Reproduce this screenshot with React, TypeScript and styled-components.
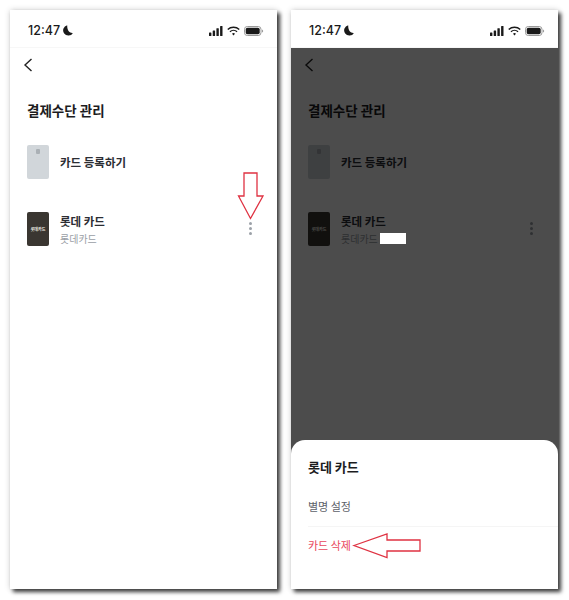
import styled, { createGlobalStyle } from 'styled-components';

const GlobalStyle = createGlobalStyle`
  html, body {
    margin: 0;
    padding: 0;
    background: #ffffff;
  }
  body {
    font-family: 'Inter', 'Noto Sans CJK KR', sans-serif;
  }
`;

const Page = styled.div`
  width: 569px;
  height: 600px;
  box-sizing: border-box;
  padding: 10px 11px 11px 10px;
  display: flex;
  gap: 14px;
`;

const Phone = styled.section`
  position: relative;
  width: 267px;
  height: 579px;
  flex: none;
  display: flex;
  flex-direction: column;
  background: #ffffff;
  box-shadow: 3px 3px 4px rgba(0, 0, 0, 0.75), 0 0 6px rgba(0, 0, 0, 0.18);
`;

const StatusBar = styled.header`
  height: 38px;
  flex: none;
  box-sizing: border-box;
  padding: 4px 13px 0 18px;
  display: flex;
  align-items: center;
  justify-content: space-between;
  border-bottom: 1px solid #f7f7f7;
`;

const Clock = styled.div`
  display: flex;
  align-items: center;
  gap: 3px;
  font-size: 12.5px;
  font-weight: 500;
  color: #1a1a1a;
`;

const StatusIcons = styled.div`
  display: flex;
  align-items: center;
  gap: 4px;
`;

const Body = styled.main`
  position: relative;
  flex: 1;
  display: flex;
  flex-direction: column;
  padding: 0 0 0 17px;
`;

const BackButton = styled.button`
  width: 12px;
  height: 16px;
  margin: 9px 0 0 -5px;
  padding: 0;
  border: 0;
  background: none;
  display: flex;
`;

const Title = styled.h1`
  margin: 27px 0 25px;
  font-size: 13.5px;
  line-height: 20px;
  font-weight: 700;
  color: #1c1c1e;
  font-family: 'Noto Sans CJK KR', sans-serif;
`;

const Rows = styled.div`
  display: flex;
  flex-direction: column;
  gap: 33px;
`;

const Row = styled.div`
  display: flex;
  align-items: center;
  gap: 11px;
  padding-right: 25px;
`;

const Card = styled.div<{ $dark?: boolean }>`
  position: relative;
  width: 22px;
  height: 34px;
  flex: none;
  border-radius: 2px;
  background: ${({ $dark }) => ($dark ? '#3a3631' : '#d1d6da')};
  display: flex;
  align-items: center;
  justify-content: center;
`;

const Chip = styled.span`
  position: absolute;
  top: 4px;
  left: 9px;
  width: 4px;
  height: 5px;
  border-radius: 1px;
  background: #aab0b5;
`;

const CardLabel = styled.span`
  font-size: 4px;
  font-weight: 700;
  line-height: 1;
  white-space: nowrap;
  color: #f2eee6;
  font-family: 'Noto Sans CJK KR', sans-serif;
`;

const RowText = styled.div`
  flex: 1;
  min-width: 0;
  display: flex;
  flex-direction: column;
  gap: 1px;
  font-family: 'Noto Sans CJK KR', sans-serif;
`;

const RowName = styled.div`
  font-size: 11.5px;
  line-height: 17px;
  font-weight: 700;
  color: #2b2d33;
`;

const RowSub = styled.div`
  display: flex;
  align-items: center;
  gap: 2px;
  font-size: 10px;
  line-height: 15px;
  color: #9a9ea6;
`;

const Redacted = styled.span`
  width: 26px;
  height: 11px;
  background: #ffffff;
  position: relative;
  z-index: 2;
`;

const More = styled.div`
  width: 3px;
  margin-top: -2px;
  display: flex;
  flex-direction: column;
  gap: 2px;
`;

const Dot = styled.span`
  width: 3px;
  height: 3px;
  border-radius: 50%;
  background: #9ca1a8;
`;

const Scrim = styled.div`
  position: absolute;
  inset: 0;
  background: rgba(0, 0, 0, 0.7);
`;

const Sheet = styled.aside`
  position: absolute;
  left: 0;
  right: 0;
  bottom: 0;
  height: 149px;
  box-sizing: border-box;
  padding: 17px 0 0 17px;
  background: #ffffff;
  border-radius: 14px 14px 0 0;
  font-family: 'Noto Sans CJK KR', sans-serif;
`;

const SheetTitle = styled.h2`
  margin: 0 0 11px;
  font-size: 13px;
  line-height: 20px;
  font-weight: 700;
  color: #1c1c1e;
`;

const SheetItem = styled.div<{ $danger?: boolean }>`
  height: 39px;
  box-sizing: border-box;
  padding-top: 10px;
  font-size: 11px;
  line-height: 16px;
  color: ${({ $danger }) => ($danger ? '#e8475c' : '#5d6169')};
  border-bottom: ${({ $danger }) => ($danger ? '0' : '1px solid #f5f5f5')};
`;

const Callout = styled.svg`
  position: absolute;
  overflow: visible;
  pointer-events: none;
`;

const DownCallout = styled(Callout)`
  left: 228px;
  top: 162px;
`;

const LeftCallout = styled(Callout)`
  left: 62px;
  top: 523px;
`;

function Status() {
  return (
    <StatusBar>
      <Clock>
        12:47
        <svg width="10" height="11" viewBox="0 0 10 11">
          <path d="M4.200.3a5.200 5.200 0 1 0 5.700 7.600C7 8.300 4 6 4.200.3z" fill="#1a1a1a" />
        </svg>
      </Clock>
      <StatusIcons>
        <svg width="14" height="10" viewBox="0 0 14 10" fill="#1a1a1a">
          <rect x="0" y="6.500" width="2.400" height="3.500" rx=".5" />
          <rect x="3.700" y="4.500" width="2.400" height="5.500" rx=".5" />
          <rect x="7.400" y="2.300" width="2.400" height="7.700" rx=".5" />
          <rect x="11.100" y="0" width="2.400" height="10" rx=".5" />
        </svg>
        <svg width="13" height="10" viewBox="0 0 14 10" fill="none" stroke="#1a1a1a">
          <path d="M.8 3.400a9 9 0 0 1 12.400 0" strokeWidth="1.500" />
          <path d="M3.200 5.800a5.600 5.600 0 0 1 7.600 0" strokeWidth="1.500" />
          <path d="M7 9.800 5.400 8a2.400 2.400 0 0 1 3.200 0z" fill="#1a1a1a" stroke="none" />
        </svg>
        <svg width="20" height="10" viewBox="0 0 20 10">
          <rect x=".5" y=".5" width="16.500" height="9" rx="2.800" fill="none" stroke="#9a9a9a" />
          <rect x="1.700" y="1.700" width="14" height="6.600" rx="1.800" fill="#1a1a1a" />
          <path d="M18 3.400c.8.3 1.200.9 1.200 1.600s-.4 1.300-1.200 1.600z" fill="#9a9a9a" />
        </svg>
      </StatusIcons>
    </StatusBar>
  );
}

function Screen({ dimmed }: { readonly dimmed?: boolean }) {
  return (
    <Phone>
      <Status />
      <Body>
        <BackButton type="button" aria-label="뒤로">
          <svg width="12" height="16" viewBox="0 0 12 16" fill="none">
            <path d="M9.500 2 3 8l6.500 6" stroke="#222222" strokeWidth="1.400" />
          </svg>
        </BackButton>
        <Title>결제수단 관리</Title>
        <Rows>
          <Row>
            <Card>
              <Chip />
            </Card>
            <RowText>
              <RowName>카드 등록하기</RowName>
            </RowText>
          </Row>
          <Row>
            <Card $dark>
              <CardLabel>롯데카드</CardLabel>
            </Card>
            <RowText>
              <RowName>롯데 카드</RowName>
              <RowSub>
                롯데카드
                {dimmed && <Redacted />}
              </RowSub>
            </RowText>
            <More>
              <Dot />
              <Dot />
              <Dot />
            </More>
          </Row>
        </Rows>
        {dimmed && <Scrim />}
        {dimmed && (
          <Sheet>
            <SheetTitle>롯데 카드</SheetTitle>
            <SheetItem>별명 설정</SheetItem>
            <SheetItem $danger>카드 삭제</SheetItem>
          </Sheet>
        )}
      </Body>
      {!dimmed && (
        <DownCallout width="26" height="48" viewBox="0 0 26 48">
          <path d="M6 1h13v23h6L12.500 46.500.500 24H6z" fill="#ffffff" stroke="#df3242" strokeWidth="1.300" />
        </DownCallout>
      )}
      {dimmed && (
        <LeftCallout width="68" height="26" viewBox="0 0 68 26">
          <path d="M1 12.500 34 1v6h33v11H34v6.500z" fill="#ffffff" stroke="#df3242" strokeWidth="1.300" />
        </LeftCallout>
      )}
    </Phone>
  );
}

export default function App() {
  return (
    <>
      <GlobalStyle />
      <Page>
        <Screen />
        <Screen dimmed />
      </Page>
    </>
  );
}
